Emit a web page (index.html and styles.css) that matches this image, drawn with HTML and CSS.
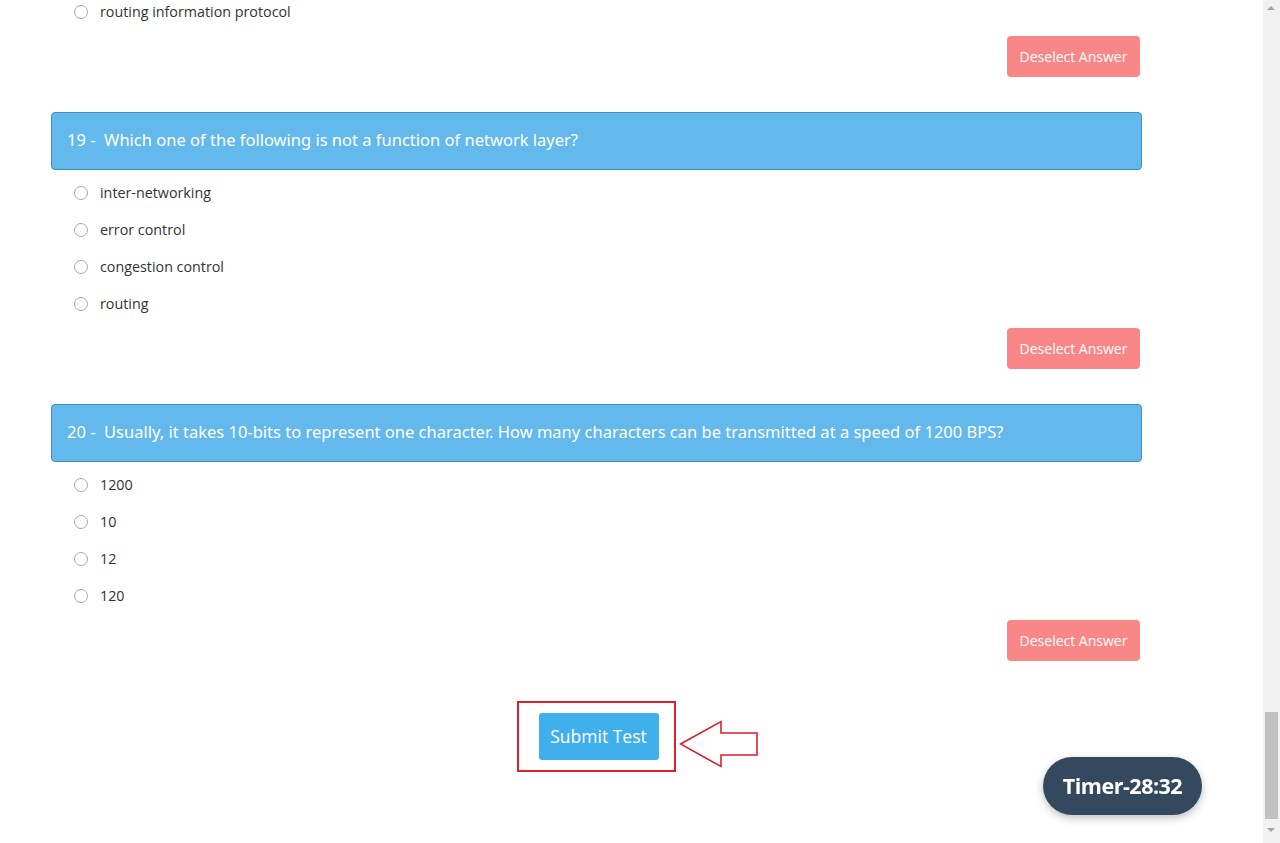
FILE: index.html
```html
<!DOCTYPE html>
<html lang="en">
<head>
    <meta charset="UTF-8">
    <meta name="viewport" content="width=device-width, initial-scale=1.0">
    <title>Online Test</title>
    <link rel="stylesheet" href="styles.css">
</head>
<body>
    <div class="page">
        <div class="quiz">
            <!-- tail of question 18 -->
            <div class="question partial">
                <ul class="options">
                    <li><span class="radio"></span>routing information protocol</li>
                </ul>
                <div class="actions">
                    <button class="deselect">Deselect Answer</button>
                </div>
            </div>

            <div class="question">
                <div class="question-head">19 -&nbsp; Which one of the following is not a function of network layer?</div>
                <ul class="options">
                    <li><span class="radio"></span>inter-networking</li>
                    <li><span class="radio"></span>error control</li>
                    <li><span class="radio"></span>congestion control</li>
                    <li><span class="radio"></span>routing</li>
                </ul>
                <div class="actions">
                    <button class="deselect">Deselect Answer</button>
                </div>
            </div>

            <div class="question">
                <div class="question-head">20 -&nbsp; Usually, it takes 10-bits to represent one character. How many characters can be transmitted at a speed of 1200 BPS?</div>
                <ul class="options">
                    <li><span class="radio"></span>1200</li>
                    <li><span class="radio"></span>10</li>
                    <li><span class="radio"></span>12</li>
                    <li><span class="radio"></span>120</li>
                </ul>
                <div class="actions">
                    <button class="deselect">Deselect Answer</button>
                </div>
            </div>

            <div class="submit-row">
                <div class="submit-box">
                    <button class="submit">Submit Test</button>
                    <svg class="arrow" width="80" height="48" viewBox="0 0 80 48">
                        <path d="M1.5 24 L42 1.5 L42 13 L78 13 L78 35 L42 35 L42 46.5 Z" fill="#fff" stroke="#d8232a" stroke-width="1.6" stroke-linejoin="miter"/>
                    </svg>
                </div>
            </div>
        </div>

        <div class="scrollbar">
            <span class="scroll-up"></span>
            <span class="scroll-thumb"></span>
            <span class="scroll-down"></span>
        </div>
    </div>

    <div class="timer">Timer-28:32</div>
</body>
</html>
```

FILE: styles.css
```css
html, body {
    margin: 0;
    padding: 0;
    height: 100%;
    overflow: hidden;
}
body {
    font-family: "Open Sans", "Noto Sans", Arial, sans-serif;
    background-color: #fff;
    color: #333;
}
.page {
    display: flex;
    height: 843px;
}
.quiz {
    flex: 1;
    padding: 0 121px 0 51px;
}
.question {
    margin-bottom: 35px;
}
.question.partial {
    margin-top: -7px;
}
.question-head {
    height: 56px;
    line-height: 54px;
    padding: 0 15px;
    background-color: #63b8ec;
    border: 1px solid #3f8ec4;
    border-radius: 4px;
    color: #fff;
    font-family: "Noto Sans", "Open Sans", sans-serif;
    font-size: 16.5px;
    letter-spacing: 0;
}
.options {
    list-style: none;
    margin: 4px 0 0;
    padding: 0;
}
.question.partial .options {
    margin-top: 0;
}
.options li {
    display: flex;
    align-items: center;
    height: 37px;
    font-size: 14.3px;
    color: #333;
}
.radio {
    width: 12px;
    height: 12px;
    border: 1px solid #a9a9a9;
    border-radius: 50%;
    margin: 0 12px 0 23px;
}
.actions {
    display: flex;
    justify-content: flex-end;
    margin-top: 6px;
    padding-right: 2px;
}
.deselect {
    width: 133px;
    height: 41px;
    background-color: #f98787;
    border: none;
    border-radius: 4px;
    color: #fff;
    font-family: "Open Sans", sans-serif;
    font-size: 14px;
    padding: 0;
}
.submit-row {
    display: flex;
    justify-content: center;
    margin-top: 40px;
}
.submit-box {
    position: relative;
    width: 155px;
    height: 67px;
    border: 2px solid #d8232a;
    display: flex;
    align-items: center;
    justify-content: center;
}
.submit {
    width: 120px;
    height: 47px;
    margin: -1px 0 0 4px;
    background-color: #3fb0ec;
    border: none;
    border-radius: 3px;
    color: #fff;
    font-family: "Open Sans", sans-serif;
    font-size: 17.5px;
    padding: 0;
}
.arrow {
    position: absolute;
    left: 160px;
    top: 17px;
}
.scrollbar {
    width: 17px;
    background-color: #f1f1f1;
    position: relative;
}
.scroll-up,
.scroll-down {
    position: absolute;
    left: 4px;
    width: 0;
    height: 0;
    border-left: 4px solid transparent;
    border-right: 4px solid transparent;
}
.scroll-up {
    top: 6px;
    border-bottom: 4px solid #a3a3a3;
}
.scroll-down {
    bottom: 11px;
    border-top: 4px solid #a3a3a3;
}
.scroll-thumb {
    position: absolute;
    left: 2px;
    right: 2px;
    top: 712px;
    height: 107px;
    background-color: #c1c1c1;
}
.timer {
    position: fixed;
    left: 1043px;
    top: 757px;
    width: 159px;
    height: 58px;
    border-radius: 29px;
    background-color: #34495e;
    color: #fff;
    font-family: "Open Sans", sans-serif;
    font-weight: 700;
    font-size: 21.5px;
    line-height: 58px;
    text-align: center;
    letter-spacing: -0.5px;
    box-shadow: 0 3px 8px rgba(0, 0, 0, 0.25);
}
```
